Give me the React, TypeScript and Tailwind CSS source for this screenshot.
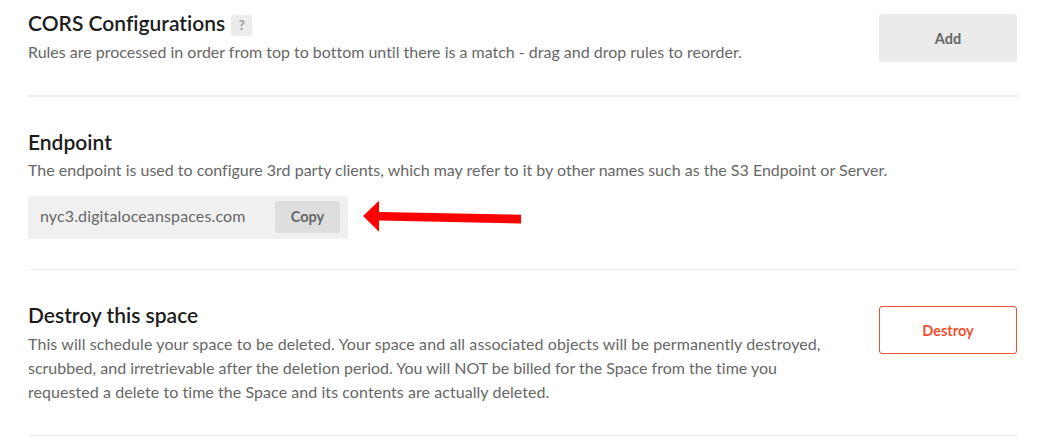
function Heading({ children }: { children: string }) {
  return <h2 className="text-[21px] leading-6 font-semibold text-[#1c1c1c] whitespace-nowrap">{children}</h2>;
}

export default function App() {
  return (
    <main className="h-[445px] w-[1044px] overflow-hidden bg-white pl-7 pr-[27px] font-['Lato',sans-serif] text-base leading-6 text-[#676767] [font-variant-ligatures:none]">
      <section className="flex h-[97px] items-start justify-between border-b-2 border-[#ebebeb] pt-[11px]">
        <div>
          <div className="flex h-[29px] items-start gap-[6px]">
            <Heading>CORS Configurations</Heading>
            <span className="mt-1 flex h-[21px] w-[21px] items-center justify-center rounded-[3px] bg-[#ebebeb] pb-px text-[13px] font-bold text-[#999]">?</span>
          </div>
          <p className="whitespace-nowrap tracking-[-0.01px]">Rules are processed in order from top to bottom until there is a match - drag and drop rules to reorder.</p>
        </div>
        <button className="mt-[3px] h-12 w-[138px] rounded-[3px] bg-[#ebebeb] pt-px text-[14.5px] font-bold text-[#676767]">Add</button>
      </section>
      <section className="h-[173px] border-b border-[#ebebeb] pt-[33px]">
        <Heading>Endpoint</Heading>
        <p className="mt-1 whitespace-nowrap">The endpoint is used to configure 3rd party clients, which may refer to it by other names such as the S3 Endpoint or Server.</p>
        <div className="mt-[14px] flex items-start gap-[15px]">
          <div className="flex h-[43px] w-[320px] items-start justify-between rounded-[3px] bg-[#f0f0f0] pt-[5px] pl-3 pr-2">
            <span className="pt-[3px] tracking-[0.13px]">nyc3.digitaloceanspaces.com</span>
            <button className="h-8 w-[65px] rounded-[3px] bg-[#dedede] text-[14.5px] font-bold text-[#676767]">Copy</button>
          </div>
          <svg className="mt-1" width="159" height="33" viewBox="0 0 159 33" aria-hidden="true"><path d="M0 16 16 .7V12l142 2.8v8.6L16 20.5v11.3Z" fill="red" /></svg>
        </div>
      </section>
      <section className="flex h-[166px] items-start justify-between border-b border-[#ebebeb] pt-[33px]">
        <div>
          <Heading>Destroy this space</Heading>
          <p className="mt-[5px] whitespace-nowrap">
            <span className="block tracking-[0.09px]">This will schedule your space to be deleted. Your space and all associated objects will be permanently destroyed,</span>
            <span className="block tracking-[-0.01px]">scrubbed, and irretrievable after the deletion period. You will NOT be billed for the Space from the time you</span>
            <span className="block tracking-[0.06px]">requested a delete to time the Space and its contents are actually deleted.</span>
          </p>
        </div>
        <button className="mt-[3px] h-12 w-[138px] rounded-[3px] border border-[#ed4f32] pt-px text-[14.5px] font-bold text-[#ed4f32]">Destroy</button>
      </section>
    </main>
  );
}
